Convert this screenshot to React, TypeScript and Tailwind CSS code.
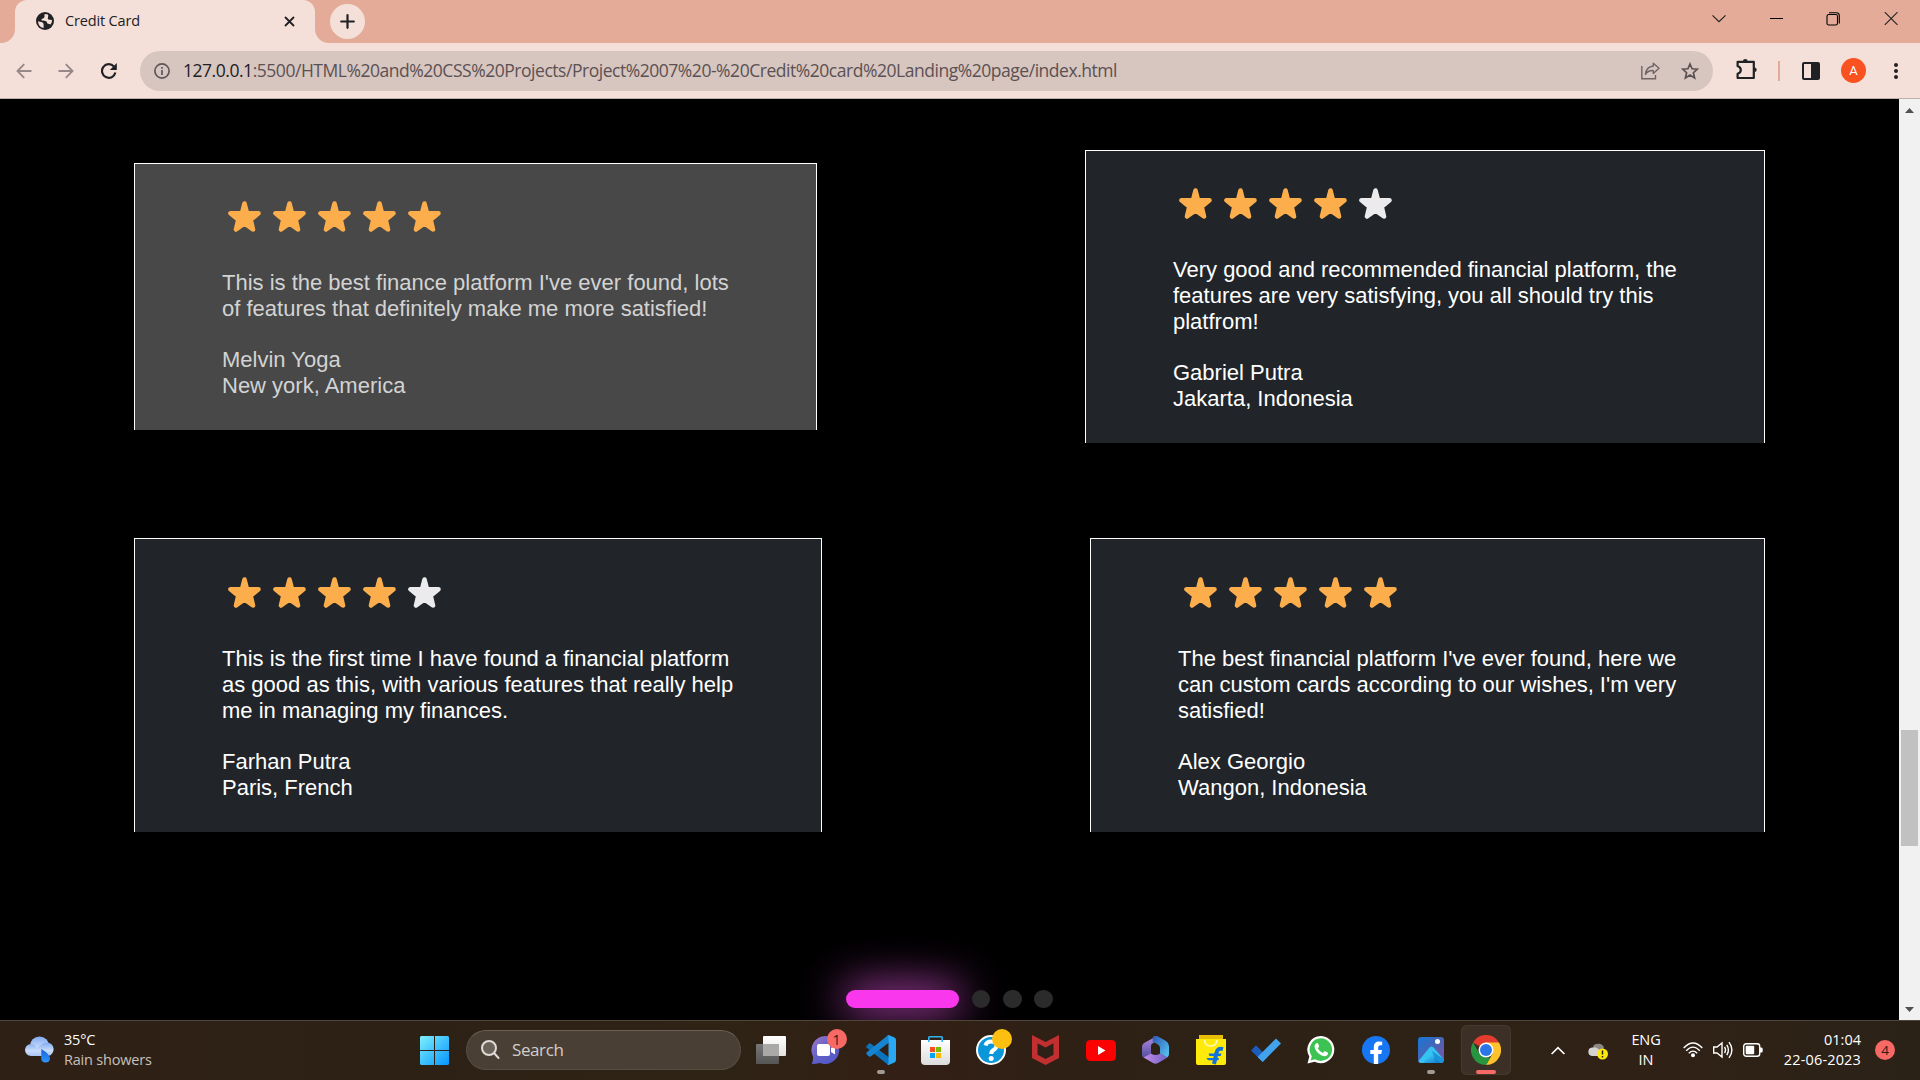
import type { ReactNode } from "react";

type Review = {
  stars: number;
  text: string[];
  name: string;
  place: string;
  box: string;
};

const topReviews: Review[] = [
  {
    stars: 5,
    text: ["This is the best finance platform I've ever found, lots", "of features that definitely make me more satisfied!"],
    name: "Melvin Yoga",
    place: "New york, America",
    box: "w-[683px] pt-[37px] bg-[#484848] text-[#d3d3d3]",
  },
  {
    stars: 4,
    text: ["Very good and recommended financial platform, the", "features are very satisfying, you all should try this", "platfrom!"],
    name: "Gabriel Putra",
    place: "Jakarta, Indonesia",
    box: "w-[680px] pt-[37px] bg-[#212529] text-white",
  },
];

const bottomReviews: Review[] = [
  {
    stars: 4,
    text: ["This is the first time I have found a financial platform", "as good as this, with various features that really help", "me in managing my finances."],
    name: "Farhan Putra",
    place: "Paris, French",
    box: "w-[688px] pt-[38px] bg-[#212529] text-white",
  },
  {
    stars: 5,
    text: ["The best financial platform I've ever found, here we", "can custom cards according to our wishes, I'm very", "satisfied!"],
    name: "Alex Georgio",
    place: "Wangon, Indonesia",
    box: "w-[675px] pt-[38px] bg-[#212529] text-white",
  },
];

function RatingStar({ on }: { on: boolean }) {
  const color = on ? "#fbae4b" : "#ebeaec";
  return (
    <svg width="45" height="32" viewBox="-6 0 45 32">
      <path
        d="M16.5 2.5L19 12.3L30.5 12.3L22.7 18.7L25 28.5L16.5 22.4L8 28.5L10.3 18.7L2.5 12.3L14 12.3Z"
        fill={color}
        stroke={color}
        strokeWidth="4.6"
        strokeLinejoin="round"
      />
    </svg>
  );
}

function ReviewCard({ review }: { review: Review }) {
  return (
    <article className={"border border-b-0 border-white pb-[31px] pl-[87px] text-[22px] leading-[26px] " + review.box}>
      <div className="mb-[37px] flex">
        {[0, 1, 2, 3, 4].map((i) => (
          <RatingStar key={i} on={i < review.stars} />
        ))}
      </div>
      {review.text.map((line) => (
        <p key={line} className="whitespace-nowrap">{line}</p>
      ))}
      <p className="mt-[25px]">{review.name}</p>
      <p>{review.place}</p>
    </article>
  );
}

function BrowserChrome() {
  return (
    <header className="h-[99px] border-b border-[#bfb0ab] bg-[#f5e0d9]">
      <div className="flex h-[43px] items-stretch bg-[#e3ab98]">
        <div className="w-[15px] bg-[#f5e0d9]">
          <div className="h-full rounded-br-[14px] bg-[#e3ab98]" />
        </div>
        <div className="flex w-[300px] items-center rounded-t-[12px] bg-[#f5e0d9] pb-px pl-[21px] pr-5">
          <svg width="18" height="18" viewBox="0 0 18 18">
            <circle cx="9" cy="9" r="9" fill="#202124" />
            <path d="M2 9.2L6 10.3Q7.6 10.8 7.6 12.4L7.6 16Q2.4 15 2 9.2ZM8.6 2C8.2 4 9 4.6 8 5.8C7 7 5.2 6.6 5.4 8C5.6 9 8 8.6 9.6 9C11.6 9.6 10.4 11.6 12.4 11.8L14.6 12.6Q16.4 10 16 8L12.4 7.4C11 6.6 12.8 4.8 12 2.6Z" fill="#f5e0d9" />
          </svg>
          <span className="ml-[11px] -mt-px text-[14.5px] tracking-[-0.15px] text-[#202124]">Credit Card</span>
          <svg className="ml-auto" width="11" height="11" viewBox="0 0 11 11" stroke="#202124" strokeWidth="1.8">
            <path d="M1 1L10 10M10 1L1 10" />
          </svg>
        </div>
        <div className="w-[15px] bg-[#f5e0d9]">
          <div className="h-full rounded-bl-[14px] bg-[#e3ab98]" />
        </div>
        <div className="mt-1 flex size-[35px] items-center justify-center rounded-full bg-[#f5e0d9]">
          <svg width="15" height="15" viewBox="0 0 15 15" stroke="#202124" strokeWidth="2.2" strokeLinecap="round">
            <path d="M7.5 1.2V13.8M1.2 7.5H13.8" />
          </svg>
        </div>
        <div className="ml-auto flex h-[38px] items-center pr-[22px]">
          <svg className="mr-[43px]" width="14" height="14" viewBox="0 0 14 14" fill="none" stroke="#202020" strokeWidth="1.1">
            <path d="M0.5 3.3L7 9.7L13.5 3.3" />
          </svg>
          <svg className="mr-[43px]" width="14" height="14" viewBox="0 0 14 14" stroke="#000" strokeWidth="1">
            <path d="M1 6.5H14" />
          </svg>
          <svg className="mr-[44px]" width="14" height="14" viewBox="0 0 14 14" fill="none" stroke="#000" strokeWidth="1.1">
            <rect x="1" y="2.5" width="10.5" height="10.5" rx="1.8" />
            <path d="M3 0.7H10.3Q13.300 0.7 13.300 3.6V11.4" />
          </svg>
          <svg width="14" height="14" viewBox="0 0 14 14" stroke="#202020" strokeWidth="1.1">
            <path d="M0.8 0.2L13.5 12.9M13.5 0.2L0.8 12.9" />
          </svg>
        </div>
      </div>
      <div className="flex h-[55px] items-center">
        <svg className="ml-4" width="16" height="16" viewBox="0 0 16 16" fill="none" stroke="#97898a" strokeWidth="1.9">
          <path d="M15.5 8H2M8.2 1.2L1.5 8L8.2 14.8" />
        </svg>
        <svg className="ml-[26px]" width="16" height="16" viewBox="0 0 16 16" fill="none" stroke="#97898a" strokeWidth="1.9">
          <path d="M0.5 8H14M7.8 1.2L14.5 8L7.8 14.8" />
        </svg>
        <svg className="ml-[27px]" width="16" height="16" viewBox="0 0 16 16" fill="none" stroke="#202124" strokeWidth="2.2">
          <path d="M14.4 9.6A6.8 6.8 0 1 1 13 3.6" />
          <path d="M15.8 0V7H8.8Z" fill="#202124" stroke="none" />
        </svg>
        <div className="ml-[23px] flex h-10 w-[1573px] items-center rounded-full bg-[#d7c5bf] pl-[14px] pr-[14px]">
          <svg width="16" height="16" viewBox="0 0 16 16" fill="none" stroke="#5f5659" strokeWidth="1.7">
            <circle cx="8" cy="8" r="7.1" />
            <path d="M8 7V12M8 4V5.8" />
          </svg>
          <p className="ml-[13px] -mt-px whitespace-nowrap text-[17.5px] tracking-[-0.466px] text-[#5b5153]">
            <span className="text-[#202124]">127.0.0.1</span>:5500/HTML%20and%20CSS%20Projects/Project%2007%20-%20Credit%20card%20Landing%20page/index.html
          </p>
          <svg className="ml-auto" width="19" height="18" viewBox="0 0 19 18" fill="none" stroke="#6d6465" strokeWidth="1.4">
            <path d="M0.8 4V16.8H14.5V13" />
            <path d="M12.3 1.2L18 6.3L12.3 11.4V8.6Q7.2 8.2 4.4 12.4Q5 5 12.3 4Z" strokeLinejoin="round" />
          </svg>
          <svg className="ml-[21px]" width="18" height="18" viewBox="0 0 18 18" fill="none" stroke="#5b5153" strokeWidth="1.7">
            <path d="M9 2L11.1 6.8L16.3 7.2L12.4 10.7L13.6 15.9L9 13.1L4.4 15.9L5.6 10.7L1.7 7.2L6.9 6.8Z" />
          </svg>
        </div>
        <svg className="ml-[23px] -mt-[3px]" width="22" height="22" viewBox="0 0 22 22" fill="none" stroke="#202124" strokeWidth="2.2" strokeLinejoin="round">
          <path d="M1.6 3.8H17.8V20H1.6V15.8Q4.8 14.6 4.8 11.9Q4.8 9.2 1.6 8Z" />
          <path d="M6.9 3.4A2.4 2.4 0 0 1 11.7 3.4ZM18.4 9.5A2.3 2.3 0 0 1 18.4 14.1Z" fill="#202124" stroke="none" />
        </svg>
        <div className="ml-5 h-5 w-0.5 bg-[#e3ab98]" />
        <svg className="ml-[22px]" width="18" height="18" viewBox="0 0 18 18">
          <rect x="1" y="1" width="16" height="16" rx="1" fill="none" stroke="#202124" strokeWidth="2" />
          <path d="M9 1H17V17H9Z" fill="#202124" />
        </svg>
        <div className="ml-[21px] flex size-[25px] items-center justify-center rounded-full bg-[#f9511f] font-[Roboto] text-[13px] text-white">A</div>
        <svg className="ml-7" width="4" height="16" viewBox="0 0 4 16" fill="#202124">
          <circle cx="2" cy="2" r="2" />
          <circle cx="2" cy="8" r="2" />
          <circle cx="2" cy="14" r="2" />
        </svg>
      </div>
    </header>
  );
}

function ScrollBar() {
  return (
    <div className="flex w-[21px] flex-col items-center bg-[#f1f1f1]">
      <svg className="mt-[9px]" width="9" height="5" viewBox="0 0 9 5"><path d="M4.5 0L9 5H0Z" fill="#505050" /></svg>
      <div className="mt-[617px] h-[116px] w-[17px] bg-[#c1c1c1]" />
      <svg className="mt-auto mb-2" width="9" height="5" viewBox="0 0 9 5"><path d="M0 0H9L4.5 5Z" fill="#505050" /></svg>
    </div>
  );
}

function TaskItem({ children, mark, active }: { children: ReactNode; mark?: ReactNode; active?: boolean }) {
  return (
    <div className="flex w-[55px] justify-center">
      <div className={"relative flex size-[50px] items-center justify-center rounded-md " + (active ? "bg-[#3c3026] ring-1 ring-inset ring-[#463a30]" : "")}>
        {children}
        {mark}
        {active && <div className="absolute bottom-px left-[15px] h-1 w-5 rounded-full bg-[#f76964]" />}
      </div>
    </div>
  );
}

const idleMark = <div className="absolute bottom-px left-[21px] h-1 w-2 rounded-full bg-[#a09a94]" />;

function TaskBar() {
  return (
    <footer className="flex h-[60px] items-center border-t border-[#50453b] bg-[#2e2116] bg-[linear-gradient(90deg,#2f2015_0%,#2d2115_20%,#2e2315_38%,#331f15_47%,#2e2015_55%,#2d2215_75%,#302116_85%,#2b2217_100%)] pb-px text-white">
      <svg className="ml-[25px]" width="30" height="28" viewBox="0 0 30 28">
        <defs>
          <linearGradient id="cloud" x1="0" y1="0" x2="0" y2="1">
            <stop offset="0" stopColor="#7fa9f0" />
            <stop offset="0.6" stopColor="#c9dcfa" />
            <stop offset="1" stopColor="#a9c5f5" />
          </linearGradient>
          <linearGradient id="drop" x1="0" y1="0" x2="0" y2="1">
            <stop offset="0" stopColor="#1a62d8" />
            <stop offset="1" stopColor="#2b97ff" />
          </linearGradient>
        </defs>
        <circle cx="14.5" cy="10" r="9.6" fill="url(#cloud)" />
        <path d="M6 8Q10.5 8 12 13Q16 7 22 6.5A6.8 6.8 0 0 1 23 20H6A6 6 0 0 1 6 8Z" fill="url(#cloud)" />
        <path d="M16.3 13Q25 18 25 23A4.5 4.5 0 0 1 16.2 23Z" fill="url(#drop)" />
      </svg>
      <div className="-mt-px ml-[9px] w-[120px] text-[14.5px] leading-5 tracking-[-0.2px]">
        <p>35°C</p>
        <p className="text-[#c6c0bb]">Rain showers</p>
      </div>

      <svg className="ml-[236px]" width="29" height="29" viewBox="0 0 29 29">
        <defs>
          <linearGradient id="win" x1="0" y1="0" x2="1" y2="1">
            <stop offset="0" stopColor="#7df0fd" />
            <stop offset="1" stopColor="#0594ff" />
          </linearGradient>
        </defs>
        <path d="M1 0H14V14H0V1ZM15 0H28L29 1V14H15ZM0 15H14V29H1L0 28ZM15 15H29V28L28 29H15Z" fill="url(#win)" />
      </svg>

      <div className="ml-[17px] flex h-10 w-[275px] items-center rounded-full border border-[#584d43] border-t-[#6a6056] bg-[#4a3f35] pl-3.5">
        <svg width="19" height="20" viewBox="0 0 19 20" fill="none" stroke="#dedbd8" strokeWidth="2">
          <circle cx="8" cy="8" r="7" fill="#6b625a" />
          <path d="M13 13L17.5 18" strokeLinecap="round" />
        </svg>
        <span className="ml-3 text-[17px] tracking-[-0.4px] text-[#d2cecb]">Search</span>
      </div>

      <div className="ml-[2px] flex">
        <TaskItem>
          <svg width="30" height="28" viewBox="0 0 30 28">
            <defs>
              <linearGradient id="tvFront" x1="0" y1="0" x2="0" y2="1"><stop offset="0" stopColor="#ffffff" /><stop offset="1" stopColor="#e2e1e0" /></linearGradient>
              <linearGradient id="tvBack" x1="0" y1="0" x2="0" y2="1"><stop offset="0" stopColor="#777" /><stop offset="1" stopColor="#555" /></linearGradient>
            </defs>
            <rect x="0" y="8" width="23" height="20" rx="1" fill="url(#tvBack)" />
            <rect x="7" y="0" width="23" height="20" rx="1" fill="url(#tvFront)" />
            <rect x="7" y="8" width="16" height="12" fill="#aaa9a8" />
          </svg>
        </TaskItem>
        <TaskItem mark={<div className="absolute top-[4px] left-[26px] flex size-5 items-center justify-center rounded-full bg-[#f76964] text-[14px] text-[#2b1b17]">1</div>}>
          <svg width="29" height="28" viewBox="0 0 29 28">
            <defs><linearGradient id="chat" x1="0" y1="0" x2="1" y2="1"><stop offset="0" stopColor="#a07ac8" /><stop offset="0.5" stopColor="#5f5fc7" /><stop offset="1" stopColor="#5056c8" /></linearGradient></defs>
            <path d="M14.5 0A14 14 0 1 1 9 27Q5 28 0.8 28Q2.5 24 2 20.5A14 14 0 0 1 14.5 0Z" fill="url(#chat)" />
            <rect x="6" y="8" width="13" height="12" rx="2" fill="#fff" />
            <path d="M20 12L24 9.5V18.5L20 16Z" fill="#fff" />
          </svg>
        </TaskItem>
        <TaskItem mark={idleMark}>
          <svg width="30" height="30" viewBox="0 0 30 30">
            <path d="M0.5 11L3 8.5Q4 8 5 8.8L23 22.5V29.5Q22 30 21 29L0.5 12.500Q0 11.700 0.500 11Z" fill="#0b74be" />
            <path d="M0.5 19L3 21.5Q4 22 5 21.2L23 7.5V0.5Q22 0 21 1L0.5 17.5Q0 18.2 0.5 19Z" fill="#1684d0" />
            <path d="M22.5 0L28.5 2.6Q30 3.4 30 5V25Q30 26.6 28.5 27.4L22.5 30Q21.5 30 20.8 29.3Q22.5 30 22.5 28V2Q22.5 0 20.8 0.8Q21.5 0 22.5 0Z" fill="#2ba8f3" />
          </svg>
        </TaskItem>
        <TaskItem>
          <svg width="29" height="29" viewBox="0 0 29 29">
            <defs><linearGradient id="bag" x1="0" y1="0" x2="0" y2="1"><stop offset="0" stopColor="#fff" /><stop offset="1" stopColor="#dcdcdc" /></linearGradient></defs>
            <path d="M0 4H29V25Q29 29 25 29H4Q0 29 0 25Z" fill="url(#bag)" />
            <path d="M7.800 6V1.500Q7.800 0.800 8.500 0.800H20.500Q21.200 0.800 21.200 1.500V6" fill="none" stroke="#2fb4ef" strokeWidth="1.6" />
            <path d="M9 11H14V16H9Z" fill="#f25022" />
            <path d="M15 11H20V16H15Z" fill="#7fba00" />
            <path d="M9 17H14V22H9Z" fill="#00a4ef" />
            <path d="M15 17H20V22H15Z" fill="#ffb900" />
          </svg>
        </TaskItem>
        <TaskItem mark={<div className="absolute top-[4px] left-[26px] size-5 rounded-full bg-[#fdbf10]" />}>
          <div className="flex size-[30px] items-center justify-center rounded-full border-2 border-white bg-[#0a97d9]">
            <svg width="26" height="26" viewBox="0 0 26 26" fill="none" stroke="#fff" strokeWidth="4">
              <path d="M7.5 8.5Q8.5 4.5 13 4.5Q18.5 4.5 18.5 8.8Q18.5 11 15.8 12.8Q13.2 14.4 13.2 17" />
              <circle cx="13.2" cy="21.5" r="2.5" fill="#fff" stroke="none" />
            </svg>
          </div>
        </TaskItem>
        <TaskItem>
          <svg width="27" height="30" viewBox="0 0 27 30">
            <path d="M0 0L13.5 7L27 0V23L13.5 30L0 23Z" fill="#c22f31" />
            <path d="M5.5 8.2L13.5 12.4L21.5 8.2V19.8L13.5 24L5.5 19.8Z" fill="#2e2016" />
          </svg>
        </TaskItem>
        <TaskItem>
          <svg width="30" height="21" viewBox="0 0 30 21">
            <rect width="30" height="21" rx="4.5" fill="#fe0000" />
            <path d="M12 6L19.5 10.5L12 15Z" fill="#fff" />
          </svg>
        </TaskItem>
        <TaskItem>
          <svg width="27" height="28" viewBox="0 0 27 28">
            <defs>
              <linearGradient id="m1" x1="0" y1="0" x2="0" y2="1"><stop offset="0" stopColor="#b58be4" /><stop offset="1" stopColor="#4f4e9c" /></linearGradient>
              <linearGradient id="m2" x1="0" y1="0" x2="1" y2="1"><stop offset="0" stopColor="#2b59b6" /><stop offset="1" stopColor="#58c9f4" /></linearGradient>
              <linearGradient id="m3" x1="0" y1="0" x2="1" y2="0"><stop offset="0" stopColor="#c48ae8" /><stop offset="1" stopColor="#6d63c6" /></linearGradient>
            </defs>
            <path d="M15 0L3 6.5Q0 8 0 11V19Q0 22 4 22L9 20V10Q9 8 11 7L16 4Z" fill="url(#m1)" />
            <path d="M11 0.5Q14 -1 17 1L24 5Q27 7 27 10V18Q27 20 25 21.5L18 17.5V12Q18 9.5 16 8.5L10.5 5.5Z" fill="url(#m2)" />
            <path d="M1.500 21.500L9 17.500Q13.500 20.500 18 17.500L25.500 21.500L16 27Q13.500 28.500 11 27Z" fill="url(#m3)" />
          </svg>
        </TaskItem>
        <TaskItem>
          <svg width="30" height="30" viewBox="0 0 30 30">
            <path d="M3 0H27V5H3Z" fill="#e7bd08" />
            <path d="M0 4H30V28Q30 30 28 30H2Q0 30 0 28Z" fill="#ffea0a" />
            <path d="M8.5 5Q9 11 14.5 11Q20.5 11 21 5" fill="none" stroke="#fff8c0" strokeWidth="1.6" />
            <path d="M27 14.200Q21.500 12.500 20.500 18L18 29" fill="none" stroke="#1272dc" strokeWidth="4" />
            <path d="M12.500 18.500H25.500L24.700 21H13.500ZM10.500 23H23L22.400 25.200H12Z" fill="#1272dc" />
          </svg>
        </TaskItem>
        <TaskItem>
          <svg width="30" height="24" viewBox="0 0 30 24">
            <path d="M0 12.5L5 7.3L16.5 19L11.7 24Z" fill="#1c5cbd" />
            <path d="M6.5 19L25 0.5L30 5.5L11.7 24Z" fill="#42a2ec" />
          </svg>
        </TaskItem>
        <TaskItem>
          <svg width="28" height="28" viewBox="0 0 28 28">
            <path d="M14 0A13.6 13.6 0 1 1 7.5 25.7L0.5 27.5L2.3 20.6A13.6 13.6 0 0 1 14 0Z" fill="#fff" />
            <path d="M14 2.3A11.3 11.3 0 1 1 8 23.3L3.6 24.4L4.8 20.2A11.3 11.3 0 0 1 14 2.3Z" fill="#3dc351" />
            <path d="M9.5 7.2Q8 8 7.5 10C7.2 14 13 20.3 18 20.3Q20.5 20 21 18V16.8L17.6 15L15.8 17Q12.5 15.8 10.8 12.3L12.2 10.6L11 7.3Q10.3 6.8 9.5 7.2Z" fill="#fff" />
          </svg>
        </TaskItem>
        <TaskItem>
          <svg width="28" height="28" viewBox="0 0 28 28">
            <circle cx="14" cy="14" r="14" fill="#1777f2" />
            <path d="M11.8 27.8V18H8.3V14H11.8V11Q11.8 5.5 17 5.5Q18.8 5.5 20.2 5.8V9.2H18.3Q16.2 9.2 16.2 11.3V14H20L19.3 18H16.2V27.8Q14 28.2 11.8 27.8Z" fill="#fff" />
          </svg>
        </TaskItem>
        <TaskItem mark={idleMark}>
          <svg width="26" height="26" viewBox="0 0 26 26">
            <defs>
              <linearGradient id="ph" x1="0" y1="0" x2="1" y2="1"><stop offset="0" stopColor="#1478d6" /><stop offset="0.5" stopColor="#4a63b5" /><stop offset="1" stopColor="#8452a0" /></linearGradient>
              <linearGradient id="hill" x1="0" y1="0" x2="1" y2="1"><stop offset="0" stopColor="#4ad7fa" /><stop offset="1" stopColor="#0b78d0" /></linearGradient>
            </defs>
            <rect width="26" height="26" rx="3" fill="url(#ph)" />
            <path d="M0.5 24L11.5 10.5Q13.5 8.5 15.5 10.5L25.5 22V24Q25 26 23 26H3Q1 26 0.5 24Z" fill="#35c4f2" />
            <path d="M5 26L12 18.5Q13.5 17.3 15 18.5L22.5 26Z" fill="url(#hill)" />
            <path d="M14 14L25.5 22V24Q25 26 23 26H18Z" fill="#1181cf" opacity="0.7" />
            <circle cx="19.5" cy="4.5" r="2.5" fill="#fff" />
          </svg>
        </TaskItem>
        <TaskItem active>
          <svg width="30" height="30" viewBox="0 0 48 48">
            <path d="M24 24L3.2 12A24 24 0 0 1 44.8 12Z" fill="#e33b2e" />
            <path d="M24 12H44.8A24 24 0 0 1 24 48L34.4 30Z" fill="#fdc22c" />
            <path d="M3.2 12L13.6 30L24 36H31L24 48A24 24 0 0 1 3.2 12Z" fill="#27963f" />
            <circle cx="24" cy="24" r="12" fill="#fff" />
            <circle cx="24" cy="24" r="9.6" fill="#2a75e8" />
          </svg>
        </TaskItem>
      </div>

      <svg className="ml-[38px]" width="14" height="9" viewBox="0 0 14 9" fill="none" stroke="#fff" strokeWidth="1.7">
        <path d="M0.6 8L7 1.6L13.4 8" />
      </svg>
      <svg className="ml-[23px] mt-[3px]" width="20" height="17" viewBox="0 0 20 17">
        <path d="M5 3A6 5 0 0 1 16 5L10 11Z" fill="#8b8884" />
        <path d="M4 4.5Q9 3 12 8L16 13H4A4.3 4.3 0 0 1 4 4.5Z" fill="#d3d2d0" />
        <circle cx="14.5" cy="11" r="5.5" fill="#fde80d" />
        <path d="M14.5 7.5V11.5M14.5 13V14.5" stroke="#202020" strokeWidth="1.5" />
      </svg>
      <div className="ml-[18px] w-10 text-center text-[14.5px] leading-5 tracking-[-0.1px]">
        <p>ENG</p>
        <p>IN</p>
      </div>
      <svg className="ml-[17px]" width="20" height="16" viewBox="0 0 20 16" fill="none" stroke="#fff" strokeWidth="1.4">
        <path d="M0.7 6Q10 -4 19.3 6M3.2 8.7Q10 1.5 16.8 8.7M5.8 11.3Q10 7 14.2 11.3" />
        <circle cx="10" cy="13.3" r="2" fill="#fff" stroke="none" />
      </svg>
      <svg className="ml-[10px]" width="20" height="18" viewBox="0 0 20 18" fill="none" stroke="#fff" strokeWidth="1.4">
        <path d="M0.7 6H4L9 2V16L4 12H0.7ZM11.5 6Q13.5 9 11.5 12M13.8 3.8Q17 9 13.8 14.2M16 1.2Q21.8 9 16 16.8" />
      </svg>
      <svg className="ml-[10px]" width="20" height="14" viewBox="0 0 20 14">
        <rect x="0.7" y="0.7" width="16" height="12.6" rx="2.5" fill="none" stroke="#fff" strokeWidth="1.4" />
        <rect x="2.7" y="2.7" width="8.5" height="8.6" rx="1" fill="#fff" />
        <path d="M17 4.5H18.5Q19.7 4.5 19.7 6V8Q19.7 9.5 18.5 9.5H17Z" fill="#fff" />
      </svg>
      <div className="-mt-px ml-2 w-[90px] text-right text-[14.5px] leading-5">
        <p>01:04</p>
        <p className="tracking-[0.15px]">22-06-2023</p>
      </div>
      <div className="ml-[14px] flex size-5 items-center justify-center rounded-full bg-[#f76964] text-[13.5px] text-[#2b1b17]">4</div>
    </footer>
  );
}

export default function App() {
  return (
    <div className="flex h-[1080px] w-[1920px] flex-col overflow-hidden bg-black font-['Open_Sans','Noto_Sans',sans-serif]">
      <BrowserChrome />
      <div className="flex h-[921px] overflow-hidden">
        <main className="flex flex-1 flex-col overflow-hidden bg-black px-[134px] pt-[51px] font-['Liberation_Sans',Arial,sans-serif]">
          <section className="flex h-[293px] items-center justify-between">
            {topReviews.map((r) => <ReviewCard key={r.name} review={r} />)}
          </section>
          <section className="mt-[95px] flex h-[294px] items-stretch justify-between">
            {bottomReviews.map((r) => <ReviewCard key={r.name} review={r} />)}
          </section>
          <nav className="mt-[158px] flex justify-center gap-[12.5px]">
            <div className="h-[18px] w-[113px] rounded-full bg-[#f938ee] shadow-[0_0_44px_3px_#d650d3]" />
            <div className="h-[18px] w-[18.75px] rounded-full bg-[#2b2b2b]" />
            <div className="h-[18px] w-[18.75px] rounded-full bg-[#2b2b2b]" />
            <div className="h-[18px] w-[18.75px] rounded-full bg-[#2b2b2b]" />
          </nav>
        </main>
        <ScrollBar />
      </div>
      <TaskBar />
    </div>
  );
}
